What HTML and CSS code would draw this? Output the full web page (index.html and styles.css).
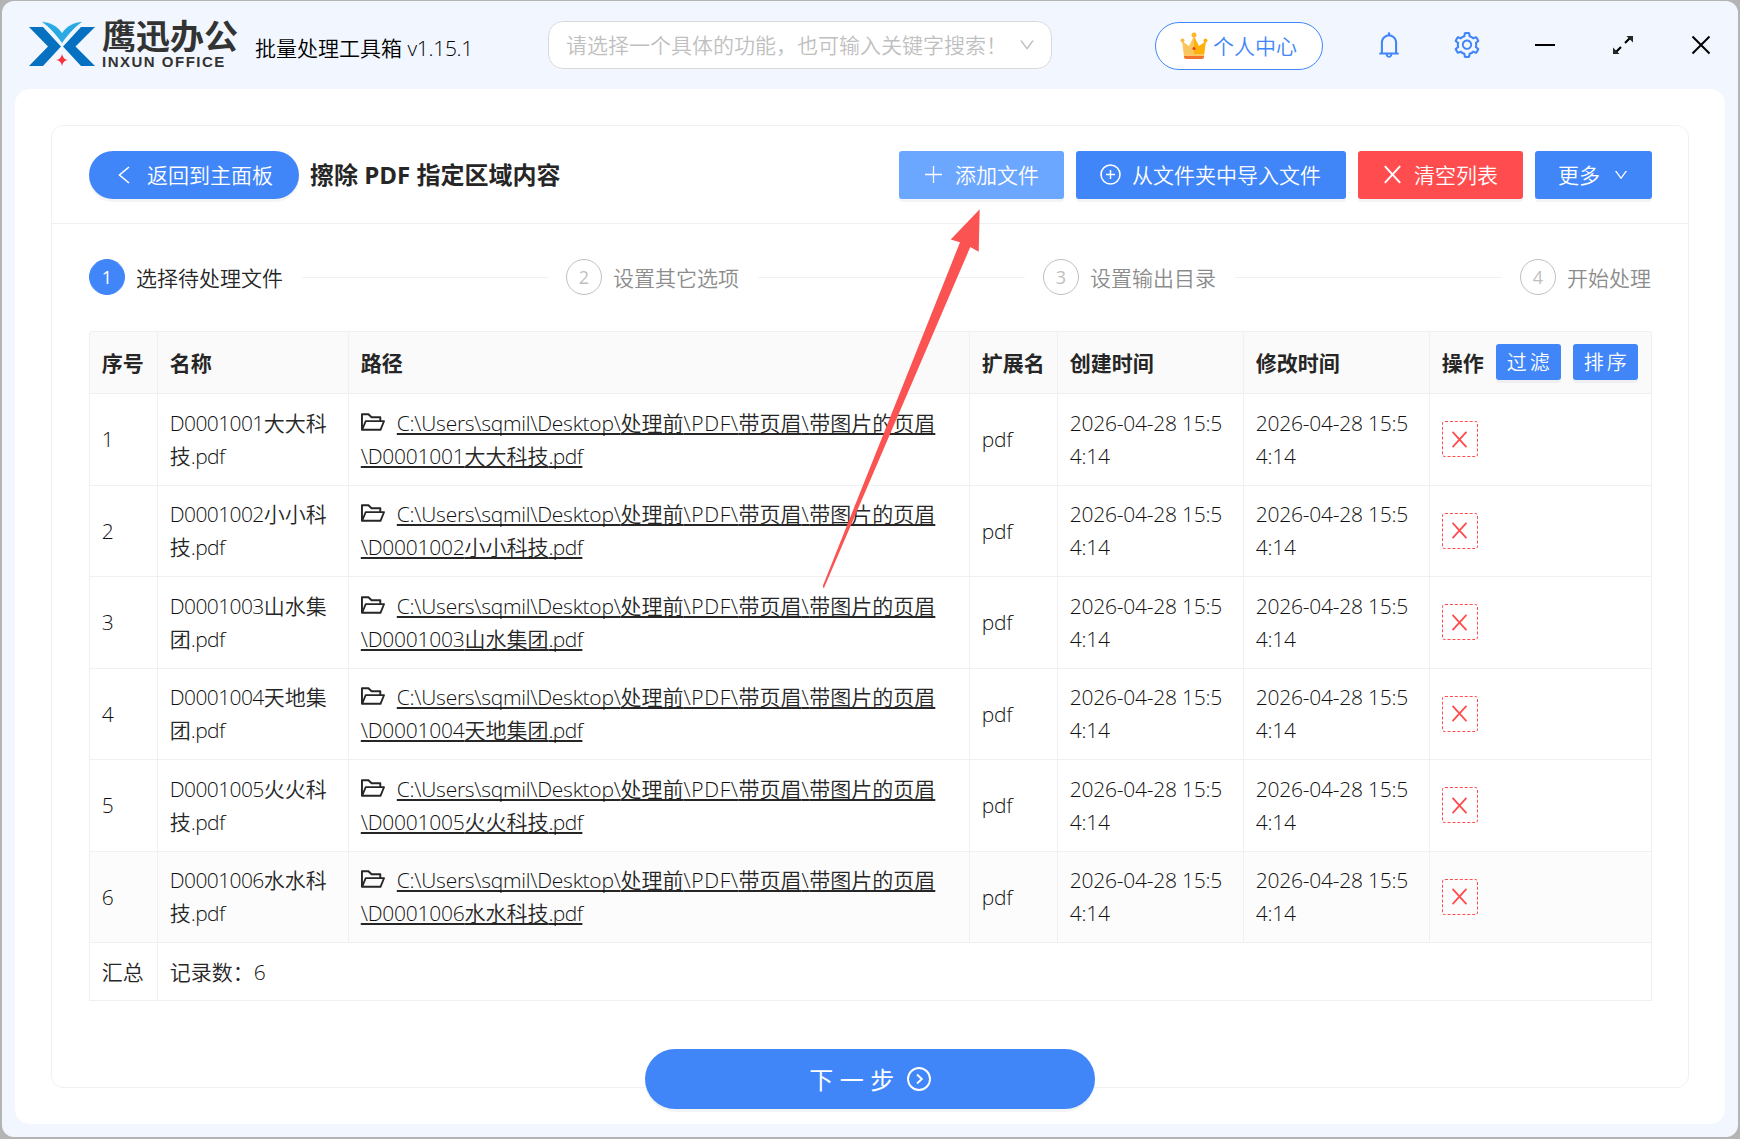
FILE: index.html
```html
<!DOCTYPE html>
<html lang="zh-CN">
<head>
  <meta charset="utf-8">
  <title>鹰迅办公</title>
  <link rel="stylesheet" href="styles.css">
</head>

<body onload="init()">

  <!-- Shared icons -->
  <svg class="sprite">
    <symbol id="i-down" viewBox="64 64 896 896"><path d="M884 256h-75c-5.1 0-9.9 2.5-12.9 6.6L512 654.2 227.9 262.6c-3-4.1-7.8-6.6-12.9-6.6h-75c-6.5 0-10.3 7.4-6.5 12.7l352.6 486.1c12.8 17.6 39 17.6 51.7 0l352.6-486.1c3.9-5.3.1-12.7-6.4-12.7z"/></symbol>
    <symbol id="i-folder" viewBox="64 64 896 896"><path d="M928 444H820V330.4c0-17.7-14.3-32-32-32H473L355.7 186.2a8.15 8.15 0 00-5.5-2.2H96c-17.7 0-32 14.3-32 32v592c0 17.7 14.3 32 32 32h698c13 0 24.8-7.9 29.7-20l134-332c1.5-3.8 2.3-7.9 2.3-12 0-17.7-14.3-32-32-32zM136 256h188.5l119.6 114.4H748V444H238c-13 0-24.8 7.9-29.7 20L136 643.2V256zm635.3 512H159l103.3-256h612.4L771.3 768z"/></symbol>
    <symbol id="i-close" viewBox="0 0 20 20"><path d="M2.7 2L17.3 18M17.3 2L2.7 18" fill="none" stroke="currentColor" stroke-width="1.9"/></symbol>
  </svg>

  <div class="window">
    <div class="topbar">
      <svg class="logo-mark" viewBox="0 0 66 46">
        <path fill="#0571c0" d="M0 6h14l18 19.500L14 45H0l19-19.500zM66 6H52L34 25.500 52 45h14L46.500 25.500z"/>
        <path fill="#2aaae2" stroke="#f2f7ff" stroke-width=".8" d="M12 .6c9 0 16 4 21 11C38 4.600 45 .6 54 .6 46 6 39 14 33 22.500 27 14 20 6 12 .6z"/>
        <path fill="#f5333f" d="M33 33q1 5.500 6 6-5 .5-6 6-1-5.500-6-6 5-.5 6-6z"/>
      </svg>
      <div class="logo-text">
        <div class="logo-cn">鹰迅办公</div>
        <div class="logo-en">INXUN OFFICE</div>
      </div>
      <div class="app-title">批量处理工具箱 <span class="en">v1.15.1</span></div>
      <div class="search">
        <span>请选择一个具体的功能，也可输入关键字搜索！</span>
        <svg width="16" height="16"><use href="#i-down"/></svg>
      </div>
      <div class="user-btn">
        <svg width="28" height="28" viewBox="0 0 28 28">
          <path fill="#f9c55c" d="M2 9l7 5 5-10v20H4z"/>
          <path fill="#ffb10a" d="M26 9l-7 5-5-10v20h10z"/>
          <path fill="#f4742b" d="M4 22.500h20v2.500q0 2-2 2H6q-2 0-2-2z"/>
          <path fill="#fbc765" d="M4 22h20v2H4z"/>
          <circle cx="14" cy="3" r="2.500" fill="#ffb629"/>
          <circle cx="2.500" cy="8.500" r="2" fill="#f9b84a"/>
          <circle cx="25.500" cy="8.500" r="2" fill="#ffb10a"/>
          <circle cx="14" cy="16.500" r="1.500" fill="#e03a2e"/>
        </svg>
        <span>个人中心</span>
      </div>
      <div class="tools">
        <svg class="blue" width="26" height="26" viewBox="64 64 896 896"><path d="M816 768h-24V428c0-141.1-104.300-257.800-240-277.200V112c0-22.100-17.900-40-40-40s-40 17.900-40 40v38.800C336.300 170.200 232 286.900 232 428v340h-24c-17.700 0-32 14.300-32 32v32c0 4.400 3.600 8 8 8h216c0 61.800 50.200 112 112 112s112-50.200 112-112h216c4.400 0 8-3.600 8-8v-32c0-17.700-14.300-32-32-32zM512 888c-26.500 0-48-21.500-48-48h96c0 26.500-21.500 48-48 48zM304 768V428c0-55.600 21.600-107.800 60.900-147.100S456.400 220 512 220c55.600 0 107.800 21.600 147.100 60.900S720 372.400 720 428v340H304z"/></svg>
        <svg class="blue" width="26" height="26" viewBox="64 64 896 896"><path d="M924.8 625.7l-65.5-56c3.1-19 4.7-38.4 4.7-57.8s-1.6-38.8-4.7-57.8l65.5-56a32.03 32.03 0 009.3-35.2l-.9-2.6a443.74 443.74 0 00-79.7-137.9l-1.8-2.1a32.12 32.12 0 00-35.1-9.5l-81.3 28.9c-30-24.6-63.5-44-99.7-57.6l-15.7-85a32.05 32.05 0 00-25.8-25.7l-2.7-.5c-52.1-9.4-106.9-9.4-159 0l-2.7.5a32.05 32.05 0 00-25.8 25.7l-15.8 85.4a351.86 351.86 0 00-99 57.4l-81.9-29.1a32 32 0 00-35.1 9.5l-1.8 2.1a446.02 446.02 0 00-79.7 137.9l-.9 2.6c-4.5 12.5-.8 26.5 9.3 35.2l66.3 56.6c-3.1 18.8-4.6 38-4.6 57.1 0 19.2 1.5 38.4 4.6 57.1L99 625.5a32.03 32.03 0 00-9.3 35.2l.9 2.6c18.1 50.4 44.9 96.9 79.7 137.9l1.8 2.1a32.12 32.12 0 0035.1 9.5l81.9-29.1c29.8 24.5 63.1 43.9 99 57.4l15.8 85.4a32.05 32.05 0 0025.8 25.7l2.7.5a449.4 449.4 0 00159 0l2.7-.5a32.05 32.05 0 0025.8-25.7l15.7-85a350 350 0 0099.7-57.6l81.3 28.9a32 32 0 0035.1-9.5l1.8-2.1c34.8-41.1 61.6-87.5 79.7-137.9l.9-2.6c4.5-12.3.8-26.3-9.3-35zM788.3 465.9c2.5 15.1 3.8 30.6 3.8 46.1s-1.3 31-3.8 46.1l-6.6 40.1 74.7 63.9a370.03 370.03 0 01-42.6 73.6L721 702.8l-31.4 25.8c-23.9 19.6-50.5 35-79.3 45.8l-38.1 14.3-17.9 97a377.5 377.5 0 01-85 0l-17.9-97.2-37.8-14.5c-28.5-10.8-55-26.2-78.7-45.7l-31.4-25.9-93.4 33.2c-17-22.9-31.2-47.6-42.6-73.6l75.5-64.5-6.5-40c-2.4-14.9-3.7-30.3-3.7-45.5 0-15.3 1.2-30.6 3.7-45.5l6.5-40-75.5-64.5c11.3-26.1 25.6-50.7 42.6-73.6l93.4 33.2 31.4-25.9c23.7-19.5 50.2-34.9 78.7-45.7l37.9-14.3 17.9-97.2c28.1-3.2 56.8-3.2 85 0l17.9 97 38.1 14.3c28.7 10.8 55.4 26.2 79.3 45.8l31.4 25.8 92.8-32.9c17 22.9 31.2 47.6 42.6 73.6L781.8 426l6.5 39.9zM512 326c-97.2 0-176 78.8-176 176s78.8 176 176 176 176-78.8 176-176-78.8-176-176-176zm79.2 255.2A111.6 111.6 0 01512 614c-29.9 0-58-11.7-79.2-32.8A111.6 111.6 0 01400 502c0-29.9 11.7-58 32.8-79.2C454 401.6 482.1 390 512 390c29.9 0 58 11.6 79.2 32.8A111.6 111.6 0 01624 502c0 29.9-11.7 58-32.8 79.2z"/></svg>
        <svg width="26" height="26" viewBox="0 0 26 26"><path d="M3 13h20" stroke="#000" stroke-width="2"/></svg>
        <svg width="26" height="26" viewBox="0 0 26 26"><path d="M15 11l5-5M6 20l5-5" stroke="#000" stroke-width="2.200"/><path d="M16.500 4H23v6.500zM3 15.500V22h6.500z"/></svg>
        <svg width="26" height="26" viewBox="0 0 26 26"><path d="M4.500 4.500l17 17M21.500 4.500l-17 17" stroke="#000" stroke-width="2"/></svg>
      </div>
    </div>

    <div class="panel">
      <div class="card">
        <div class="card-head">
          <div class="btn round">
            <svg width="18" height="18" viewBox="0 0 18 18"><path d="M14 1L4.500 9l9.500 8" fill="none" stroke="#fff" stroke-width="1.600"/></svg>
            <span>返回到主面板</span>
          </div>
          <h1>擦除 PDF 指定区域内容</h1>
          <div class="actions">
            <div class="btn light">
              <svg width="21" height="21" viewBox="0 0 21 21"><path d="M10.500 2v17M2 10.500h17" stroke="#fff" stroke-width="1.300"/></svg>
              <span>添加文件</span>
            </div>
            <div class="btn">
              <svg width="21" height="21" viewBox="0 0 21 21"><path d="M10.500 6v9M6 10.500h9" stroke="#fff" stroke-width="1.500"/><circle cx="10.500" cy="10.500" r="9.500" fill="none" stroke="#fff" stroke-width="1.600"/></svg>
              <span>从文件夹中导入文件</span>
            </div>
            <div class="btn red">
              <svg width="21" height="21"><use href="#i-close"/></svg>
              <span>清空列表</span>
            </div>
            <div class="btn more">
              <span>更多</span>
              <svg width="14" height="14"><use href="#i-down"/></svg>
            </div>
          </div>
        </div>

        <div class="steps">
          <div class="step active"><i>1</i><span>选择待处理文件</span></div>
          <div class="step"><i>2</i><span>设置其它选项</span></div>
          <div class="step"><i>3</i><span>设置输出目录</span></div>
          <div class="step last"><i>4</i><span>开始处理</span></div>
        </div>

        <table class="files">
          <colgroup>
            <col class="c-no"><col class="c-name"><col class="c-path"><col class="c-ext"><col class="c-time"><col class="c-time"><col>
          </colgroup>
          <thead>
            <tr>
              <th>序号</th>
              <th>名称</th>
              <th>路径</th>
              <th>扩展名</th>
              <th>创建时间</th>
              <th>修改时间</th>
              <th>
                <div class="ops">操作 <span class="btn small">过滤</span><span class="btn small">排序</span></div>
              </th>
            </tr>
          </thead>
          <tbody id="rows"></tbody>
          <tfoot>
            <tr>
              <td>汇总</td>
              <td colspan="6">记录数：<span class="en">6</span></td>
            </tr>
          </tfoot>
        </table>
      </div>

      <div class="next">
        <span>下一步</span>
        <svg width="24" height="24" viewBox="0 0 24 24"><circle cx="12" cy="12" r="11" fill="none" stroke="#fff" stroke-width="1.900"/><path d="M10 7.500l4.800 4.500L10 16.500" fill="none" stroke="#fff" stroke-width="1.900"/></svg>
      </div>
    </div>
  </div>

  <!-- Pointer to the add button -->
  <svg class="arrow" viewBox="0 0 160 382"><path d="M156.700 1.300L127.700 31.500l9.300 2.800L0 377.500v2l1 .5L147.300 39l8.400 4.700z" fill="#fb5252"/></svg>

  <script>
    var files = [
      ["D0001001", "大大科", "技"],
      ["D0001002", "小小科", "技"],
      ["D0001003", "山水集", "团"],
      ["D0001004", "天地集", "团"],
      ["D0001005", "火火科", "技"],
      ["D0001006", "水水科", "技"]
    ];

    function en(text, cls) {
      return '<span class="en ' + (cls || "") + '">' + text + '</span>';
    }

    function init() {
      var time = "<td>" + en("2026-04-28 15:5<br>4:14", "mid") + "</td>";
      document.getElementById("rows").innerHTML = files.map(function (f, i) {
        return "<tr>" +
          "<td>" + en(i + 1) + "</td>" +
          "<td>" + en(f[0]) + f[1] + "<br>" + f[2] + en(".pdf") + "</td>" +
          '<td><svg class="folder"><use href="#i-folder"/></svg><span class="path">' +
            en("C:\\Users\\sqmil\\Desktop\\", "mid") + "处理前" + en("\\PDF\\", "wide") + "带页眉" + en("\\", "wide") + "带图片的页眉<br>" +
            en("\\" + f[0], "mid") + f[1] + f[2] + en(".pdf") + "</span></td>" +
          "<td>" + en("pdf", "mid") + "</td>" +
          time + time +
          '<td><div class="del"><svg width="19" height="19"><use href="#i-close"/></svg></div></td>' +
          "</tr>";
      }).join("");
    }
  </script>

</body>
</html>
```
FILE: styles.css
```css
* {
  box-sizing: border-box;
}
body {
  margin: 0;
  height: 1139px;
  padding: 1px 2px 2px;
  overflow: hidden;
  background: #b4b4b4;
  color: #262626;
  font-family: "Open Sans", "Noto Sans CJK SC", sans-serif;
  font-size: 21px;
  font-weight: 350;
  line-height: 33px;
}
svg {
  flex: none;
  fill: currentColor;
}
.sprite {
  display: none;
}
.en {
  color: #111;
  letter-spacing: -0.6px;
}
.en.mid {
  letter-spacing: -0.25px;
}
.en.wide {
  letter-spacing: 0.6px;
}
.window {
  height: 1136px;
  padding: 0 13px;
  background: #f2f7ff;
  border-radius: 12px;
  overflow: hidden;
}

/* Top bar */
.topbar {
  display: flex;
  align-items: center;
  height: 88px;
  padding-left: 14px;
}
.logo-mark {
  width: 66px;
  height: 46px;
  margin-top: -2px;
}
.logo-text {
  width: 138px;
  margin: -4px 0 0 7px;
  color: #333;
  white-space: nowrap;
}
.logo-cn {
  height: 35px;
  font-size: 34px;
  font-weight: 700;
  line-height: 35px;
}
.logo-en {
  padding-top: 1px;
  font-family: "Liberation Sans", sans-serif;
  font-size: 15px;
  font-weight: 700;
  line-height: 13px;
  letter-spacing: 1.5px;
}
.app-title {
  width: 293px;
  margin: 7px 0 0 15px;
  color: #000;
  white-space: nowrap;
}
.app-title .en {
  color: #000;
  letter-spacing: -0.3px;
}
.search {
  display: flex;
  align-items: center;
  justify-content: space-between;
  width: 504px;
  height: 48px;
  padding: 0 16px 0 17px;
  background: #fff;
  border: 1px solid #d9d9d9;
  border-radius: 15px;
  color: #bfbfbf;
  white-space: nowrap;
}
.search span {
  margin-right: -20px;
}
.user-btn {
  display: flex;
  align-items: center;
  gap: 5px;
  width: 168px;
  height: 48px;
  margin: 2px 0 0 103px;
  padding-left: 24px;
  background: #fff;
  border: 1px solid #4086f9;
  border-radius: 24px;
  color: #4086f9;
}
.tools {
  display: flex;
  gap: 52px;
  margin-left: 53px;
}
.blue {
  color: #4086f9;
}

/* Main panel */
.panel {
  position: relative;
  height: 1035px;
  padding: 36px;
  background: #fff;
  border-radius: 15px;
}
.card {
  height: 963px;
  border: 1px solid #f0f0f0;
  border-radius: 12px;
}
.card-head {
  display: flex;
  align-items: center;
  height: 98px;
  padding: 0 36px 0 37px;
  border-bottom: 1px solid #f0f0f0;
}
h1 {
  margin: 0 0 0 11px;
  font-size: 24px;
  font-weight: 700;
}
.actions {
  display: flex;
  gap: 12px;
  margin-left: auto;
}
.btn {
  display: flex;
  align-items: center;
  gap: 11px;
  height: 48px;
  padding: 0 25px 0 24px;
  background: #4086f9;
  border-radius: 3px;
  box-shadow: 0 3px 0 rgba(0, 0, 0, 0.045);
  color: #fff;
}
.btn > span {
  margin-top: 1px;
}
.btn.round {
  width: 210px;
  padding-left: 26px;
  gap: 14px;
  border-radius: 24px;
}
.btn.light {
  background: #6ba6ff;
}
.btn.red {
  background: #ff4d4f;
}
.btn.more {
  padding-right: 24px;
  padding-left: 23px;
  gap: 14px;
}
.btn.small {
  height: 36px;
  padding: 1px 8px 0 11px;
  font-size: 20px;
  font-weight: 350;
  letter-spacing: 3px;
}

/* Steps */
.steps {
  display: flex;
  padding: 35px 36px 0 37px;
}
.step {
  display: flex;
  align-items: center;
  flex: 1;
  height: 36px;
  color: #8c8c8c;
}
.step i {
  width: 36px;
  height: 36px;
  margin-right: 11px;
  border: 1px solid #bfbfbf;
  border-radius: 50%;
  color: #bfbfbf;
  font-size: 18px;
  font-style: normal;
  font-weight: 400;
  line-height: 34px;
  text-align: center;
}
.step span {
  margin: 2px 1px 0 0;
}
.step::after {
  content: "";
  flex: 1;
  height: 1px;
  margin: 0 18px;
  background: #f0f0f0;
}
.step.active {
  color: #262626;
}
.step.active i {
  background: #4086f9;
  border-color: #4086f9;
  color: #fff;
}
.step.last {
  flex: none;
}
.step.last::after {
  display: none;
}

/* File list */
.files {
  width: 1563px;
  margin: 36px 0 0 37px;
  table-layout: fixed;
  border-spacing: 0;
  border: solid #f0f0f0;
  border-width: 1px 0 0 1px;
  border-radius: 3px 3px 0 0;
}
.files th,
.files td {
  padding: 1px 11.8px 0;
  border: solid #f0f0f0;
  border-width: 0 1px 1px 0;
  text-align: left;
  white-space: nowrap;
}
.files th {
  height: 62px;
  background: #fafafa;
  font-weight: 700;
}
.files tbody td {
  height: 91.5px;
}
.files tbody tr:last-child td {
  background: #fcfcfc;
}
.files tfoot td {
  height: 58px;
}
.c-no { width: 68px; }
.c-name { width: 191px; }
.c-path { width: 621px; }
.c-ext { width: 88px; }
.c-time { width: 186px; }
.ops {
  display: flex;
  align-items: center;
  gap: 12px;
}
.ops .btn {
  margin-top: -2px;
}
.folder {
  width: 24px;
  height: 24px;
  margin-right: 12px;
  vertical-align: -3px;
}
.path {
  text-decoration: underline;
  text-decoration-thickness: 2px;
  text-underline-offset: 2px;
  text-decoration-skip-ink: none;
}
.del {
  display: flex;
  align-items: center;
  justify-content: center;
  width: 36px;
  height: 36px;
  margin-top: -1px;
  border: 1px dashed #ff4d4f;
  border-radius: 3px;
  color: #ff4d4f;
}

/* Next button, sits over the bottom edge of the card */
.next {
  position: absolute;
  left: 630px;
  bottom: 15px;
  display: flex;
  align-items: center;
  justify-content: center;
  gap: 6px;
  width: 450px;
  height: 60px;
  background: #4086f9;
  border-radius: 30px;
  box-shadow: 0 3px 0 rgba(0, 0, 0, 0.045);
  color: #fff;
  font-size: 24px;
  font-weight: 400;
  letter-spacing: 6.5px;
}

.arrow {
  position: absolute;
  left: 823px;
  top: 208px;
  width: 160px;
  height: 382px;
}
```
